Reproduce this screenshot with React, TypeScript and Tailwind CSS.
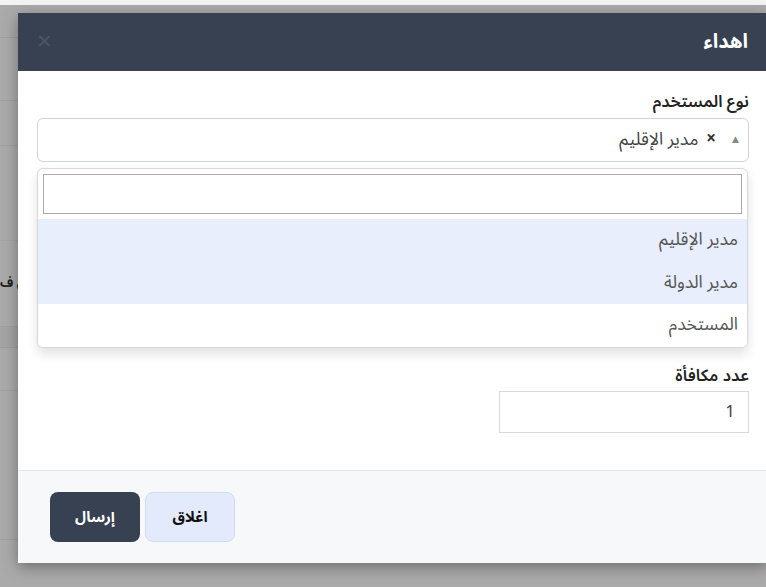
import { useState } from "react";

const options = ["مدير الإقليم", "مدير الدولة", "المستخدم"];

function Backdrop() {
  return (
    <div className="h-full w-full bg-[#aaaaaa]">
      <div className="h-[5px] bg-[#f3f3f3]" />
      <div className="h-[33px] border-b border-[#9f9f9f]" />
      <div className="h-[63px] border-b border-[#a0a0a0]" />
      <div className="h-[45px] border-b border-[#a0a0a0]" />
      <div className="h-[95px] border-b border-[#a3a3a3]" />
      <div className="flex h-[86px] items-center border-b border-[#a0a0a0] text-[13px] font-bold text-[#1f1f1f]">
        <span>ن ف</span>
      </div>
      <div className="h-[21px] border-b border-[#9c9c9c] bg-[#a4a4a4]" />
      <div className="h-[43px] border-b border-[#9f9f9f]" />
      <div className="h-[149px] border-b border-[#a0a0a0]" />
    </div>
  );
}

export default function App() {
  const [hover] = useState(1);

  return (
    <div className="relative h-[587px] w-[766px] overflow-hidden [font-family:'Noto_Sans_Arabic','DejaVu_Sans',sans-serif]">
      <Backdrop />

      <div
        dir="rtl"
        className="absolute left-[18px] top-[13px] flex h-[550px] w-[750px] flex-col bg-white shadow-[0_4px_14px_rgba(0,0,0,0.35)]"
      >
        <div className="flex h-[58px] shrink-0 items-center justify-between bg-[#374151] px-5">
          <h2 className="text-[20px] font-bold text-white">اهداء</h2>
          <span className="-ml-[1px] text-[26px] leading-none text-[#4b5563]">×</span>
        </div>

        <div className="flex-1 px-[19px] pt-[20px]">
          <label className="block h-[22px] text-[16.5px] font-semibold leading-[22px] text-[#222]">
            نوع المستخدم
          </label>
          <div className="relative mt-[5px]">
            <div className="flex h-[44px] items-center rounded-md border border-[#cfd3da] pr-[9px]">
              <span className="text-[9px] text-[#888]">▲</span>
              <span className="mr-[16px] text-[17px] font-bold text-[#333]">×</span>
              <span className="mr-[8px] text-[17.5px] text-[#444]">مدير الإقليم</span>
            </div>

            <div className="absolute left-0 right-[1px] top-[50px] z-10 overflow-hidden rounded-md border border-[#d5d8de] bg-white shadow-[0_6px_12px_rgba(0,0,0,0.12)]">
              <div className="p-[5px]">
                <input
                  className="h-[40px] w-full border border-[#aaa] bg-white px-2 outline-none"
                  defaultValue=""
                />
              </div>
              {options.map((o, i) => (
                <div
                  key={o}
                  className={
                    "flex h-[42.5px] items-center pr-[9px] text-[17.5px] text-[#555] " +
                    (i <= hover ? "bg-[#e8eefb]" : "bg-white")
                  }
                >
                  {o}
                </div>
              ))}
            </div>
          </div>

          <div className="h-[203px]" />

          <label className="block h-[22px] text-[16.5px] font-semibold leading-[22px] text-[#222]">
            عدد مكافأة
          </label>
          <input
            className="mt-[4px] h-[42px] w-[250px] border border-[#d6d9de] px-[13px] text-[17px] text-[#444] outline-none"
            defaultValue="1"
          />
        </div>

        <div className="flex h-[93px] shrink-0 items-center justify-end gap-[5px] border-t border-[#e1e8f5] bg-[#f7f8fa] pl-[32px]">
          <button className="h-[50px] w-[90px] rounded-lg border border-[#cfdcf5] bg-[#e3eafb] text-[15px] font-bold text-[#111]">
            اغلاق
          </button>
          <button className="h-[50px] w-[90px] rounded-lg bg-[#374151] text-[15px] font-bold text-white">
            إرسال
          </button>
        </div>
      </div>
    </div>
  );
}
